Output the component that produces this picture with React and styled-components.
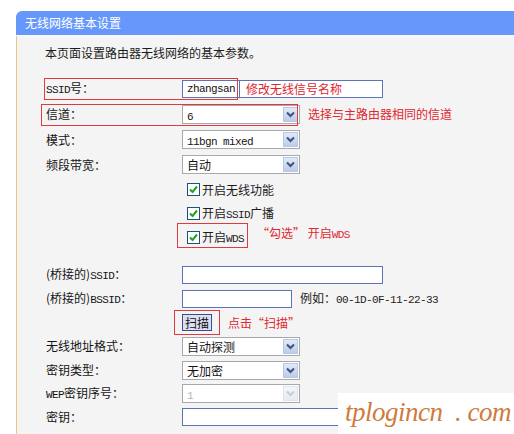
import React from "react";
import styled, { createGlobalStyle } from "styled-components";

const GlobalStyle = createGlobalStyle`
  html, body {
    margin: 0;
    padding: 0;
    background: #fff;
  }
  body {
    font-family: "Noto Sans CJK SC", "Noto Sans", sans-serif;
    font-size: 12px;
    color: #1c1c1c;
    overflow: hidden;
  }
`;

const Page = styled.div`
  position: relative;
  width: 514px;
  height: 434px;
  padding: 11px 0 0 16px;
  box-sizing: border-box;
  overflow: hidden;
`;

const Header = styled.div`
  height: 24px;
  background: #6698fb;
  border-top-left-radius: 6px;
  color: #fff;
  font-size: 12px;
  line-height: 24px;
  padding-left: 9px;
`;

const Body = styled.div`
  height: 400px;
  background: #f4f4f4;
  border-left: 1px solid #f0c488;
  border-top: 2px solid #fbf5f7;
  padding: 8px 0 0 29px;
`;

const Intro = styled.p`
  margin: 0 0 15px -1px;
  line-height: 16px;
`;

const Form = styled.div`
  display: flex;
  flex-direction: column;
`;

const Row = styled.div`
  position: relative;
  display: flex;
  align-items: center;
  height: ${(p) => p.$h || 24}px;
`;

const Spacer = styled.div`
  height: 13px;
`;

const Label = styled.div`
  width: 136px;
  flex-shrink: 0;
  line-height: 16px;
  color: #141414;
`;

const Latin = styled.span`
  font-family: "Liberation Mono", "DejaVu Sans Mono", monospace;
  font-size: 11px;
  letter-spacing: -0.6px;
`;

const TextBox = styled.div`
  display: flex;
  align-items: center;
  width: ${(p) => p.$w}px;
  height: 18px;
  box-sizing: border-box;
  background: #fff;
  border: 1px solid #5b74b8;
`;

const BoxValue = styled.span`
  display: flex;
  align-items: center;
  height: 100%;
  padding: 0 4px;
  border-right: 1px solid #5b74b8;
  font-family: "Liberation Mono", "DejaVu Sans Mono", monospace;
  font-size: 11px;
  letter-spacing: -0.6px;
  color: #111;
`;

const SelectBox = styled.div`
  display: flex;
  align-items: center;
  justify-content: space-between;
  width: 118px;
  height: 19px;
  box-sizing: border-box;
  background: #fff;
  border: 1px solid #a9a9ad;
  padding: 0 1px 0 4px;
  color: ${(p) => (p.$disabled ? "#b4b4b4" : "#151515")};
`;

const Arrow = styled.span`
  display: flex;
  align-items: center;
  justify-content: center;
  width: 15px;
  height: 15px;
  box-sizing: border-box;
  border: 1px solid ${(p) => (p.$disabled ? "#dfe3ea" : "#b8c7e2")};
  background: ${(p) =>
    p.$disabled
      ? "linear-gradient(#f4f6f9, #e8ecf1)"
      : "linear-gradient(#e2eaf8, #bccbe7)"};
`;

const CheckLine = styled.div`
  display: flex;
  align-items: center;
  gap: 2px;
  margin-left: 5px;
  line-height: 16px;
`;

const CheckBox = styled.span`
  display: inline-flex;
  align-items: center;
  justify-content: center;
  width: 13px;
  height: 13px;
  box-sizing: border-box;
  border: 1px solid #1c5180;
  background: #fff;
`;

const ScanButton = styled.div`
  display: flex;
  align-items: center;
  justify-content: center;
  width: 30px;
  height: 17px;
  box-sizing: border-box;
  border: 1px solid #3b4c8a;
  background: #dcdff2;
  font-size: 12px;
  color: #111;
`;

const Note = styled.span`
  margin-left: ${(p) => p.$gap || 8}px;
  align-self: ${(p) => (p.$top ? "flex-start" : "auto")};
  color: #e0262e;
  font-size: 12px;
  line-height: 16px;
  white-space: nowrap;
`;

const Hint = styled.span`
  margin-left: 8px;
  color: #222;
  line-height: 16px;
`;

const Frame = styled.span`
  position: absolute;
  left: ${(p) => p.$l}px;
  top: ${(p) => p.$t}px;
  width: ${(p) => p.$w}px;
  height: ${(p) => p.$h}px;
  box-sizing: border-box;
  border: 1px solid #de3a40;
  pointer-events: none;
`;

const Watermark = styled.div`
  position: absolute;
  right: 0;
  bottom: 0;
  width: 176px;
  height: 41px;
  background: #fff;
  padding-left: 7px;
  box-sizing: border-box;
  font-family: "Liberation Serif", "DejaVu Serif", serif;
  font-style: italic;
  font-size: 27px;
  letter-spacing: -0.5px;
  line-height: 38px;
  color: #cf7b3e;
  white-space: pre;
`;

const Select = ({ value, disabled }) => (
  <SelectBox $disabled={disabled}>
    <span>{value}</span>
    <Arrow $disabled={disabled}>
      <svg width="9" height="7" viewBox="0 0 9 7">
        <path
          d="M1 1.5 L4.5 5 L8 1.5"
          fill="none"
          stroke={disabled ? "#c5ccd8" : "#3d5182"}
          strokeWidth="2"
        />
      </svg>
    </Arrow>
  </SelectBox>
);

const Check = ({ children }) => (
  <CheckLine>
    <CheckBox>
      <svg width="11" height="11" viewBox="0 0 11 11">
        <path
          d="M2 5.5 L4.5 8 L9 2.5"
          fill="none"
          stroke="#21a121"
          strokeWidth="2"
        />
      </svg>
    </CheckBox>
    <span>{children}</span>
  </CheckLine>
);

const App = () => {
  return (
    <Page>
      <GlobalStyle />
      <Header>无线网络基本设置</Header>
      <Body>
        <Intro>本页面设置路由器无线网络的基本参数。</Intro>
        <Form>
          <Row $h={25}>
            <Label>
              <Latin>SSID</Latin>号：
            </Label>
            <TextBox $w={201}>
              <BoxValue>zhangsan</BoxValue>
              <Note $gap={6}>修改无线信号名称</Note>
            </TextBox>
            <Frame $l={-2} $t={2} $w={194} $h={22} />
          </Row>
          <Row $h={26}>
            <Label>信道：</Label>
            <Select value={<Latin>6</Latin>} />
            <Note>选择与主路由器相同的信道</Note>
            <Frame $l={-5} $t={3} $w={257} $h={22} />
          </Row>
          <Row $h={25}>
            <Label>模式：</Label>
            <Select value={<Latin>11bgn mixed</Latin>} />
          </Row>
          <Row $h={25}>
            <Label>频段带宽：</Label>
            <Select value="自动" />
          </Row>
          <Row $h={25}>
            <Label />
            <Check>开启无线功能</Check>
          </Row>
          <Row $h={23}>
            <Label />
            <Check>
              开启<Latin>SSID</Latin>广播
            </Check>
          </Row>
          <Row $h={25}>
            <Label />
            <Check>
              开启<Latin>WDS</Latin>
            </Check>
            <Note $gap={13} $top>
              “勾选” 开启<Latin>WDS</Latin>
            </Note>
            <Frame $l={131} $t={-2} $w={71} $h={25} />
          </Row>
          <Spacer />
          <Row $h={24}>
            <Label>
              (桥接的)<Latin>SSID</Latin>：
            </Label>
            <TextBox $w={201} />
          </Row>
          <Row $h={24}>
            <Label>
              (桥接的)<Latin>BSSID</Latin>：
            </Label>
            <TextBox $w={110} />
            <Hint>
              例如：<Latin>00-1D-0F-11-22-33</Latin>
            </Hint>
          </Row>
          <Row $h={23}>
            <Label />
            <ScanButton>扫描</ScanButton>
            <Note $gap={16}>点击“扫描”</Note>
            <Frame $l={128} $t={-1} $w={46} $h={25} />
          </Row>
          <Row $h={24}>
            <Label>无线地址格式：</Label>
            <Select value="自动探测" />
          </Row>
          <Row $h={24}>
            <Label>密钥类型：</Label>
            <Select value="无加密" />
          </Row>
          <Row $h={23}>
            <Label>
              <Latin>WEP</Latin>密钥序号：
            </Label>
            <Select value={<Latin>1</Latin>} disabled />
          </Row>
          <Row $h={24}>
            <Label>密钥：</Label>
            <TextBox $w={201} />
          </Row>
        </Form>
      </Body>
      <Watermark>{"tplogincn  . com"}</Watermark>
    </Page>
  );
};

export default App;
